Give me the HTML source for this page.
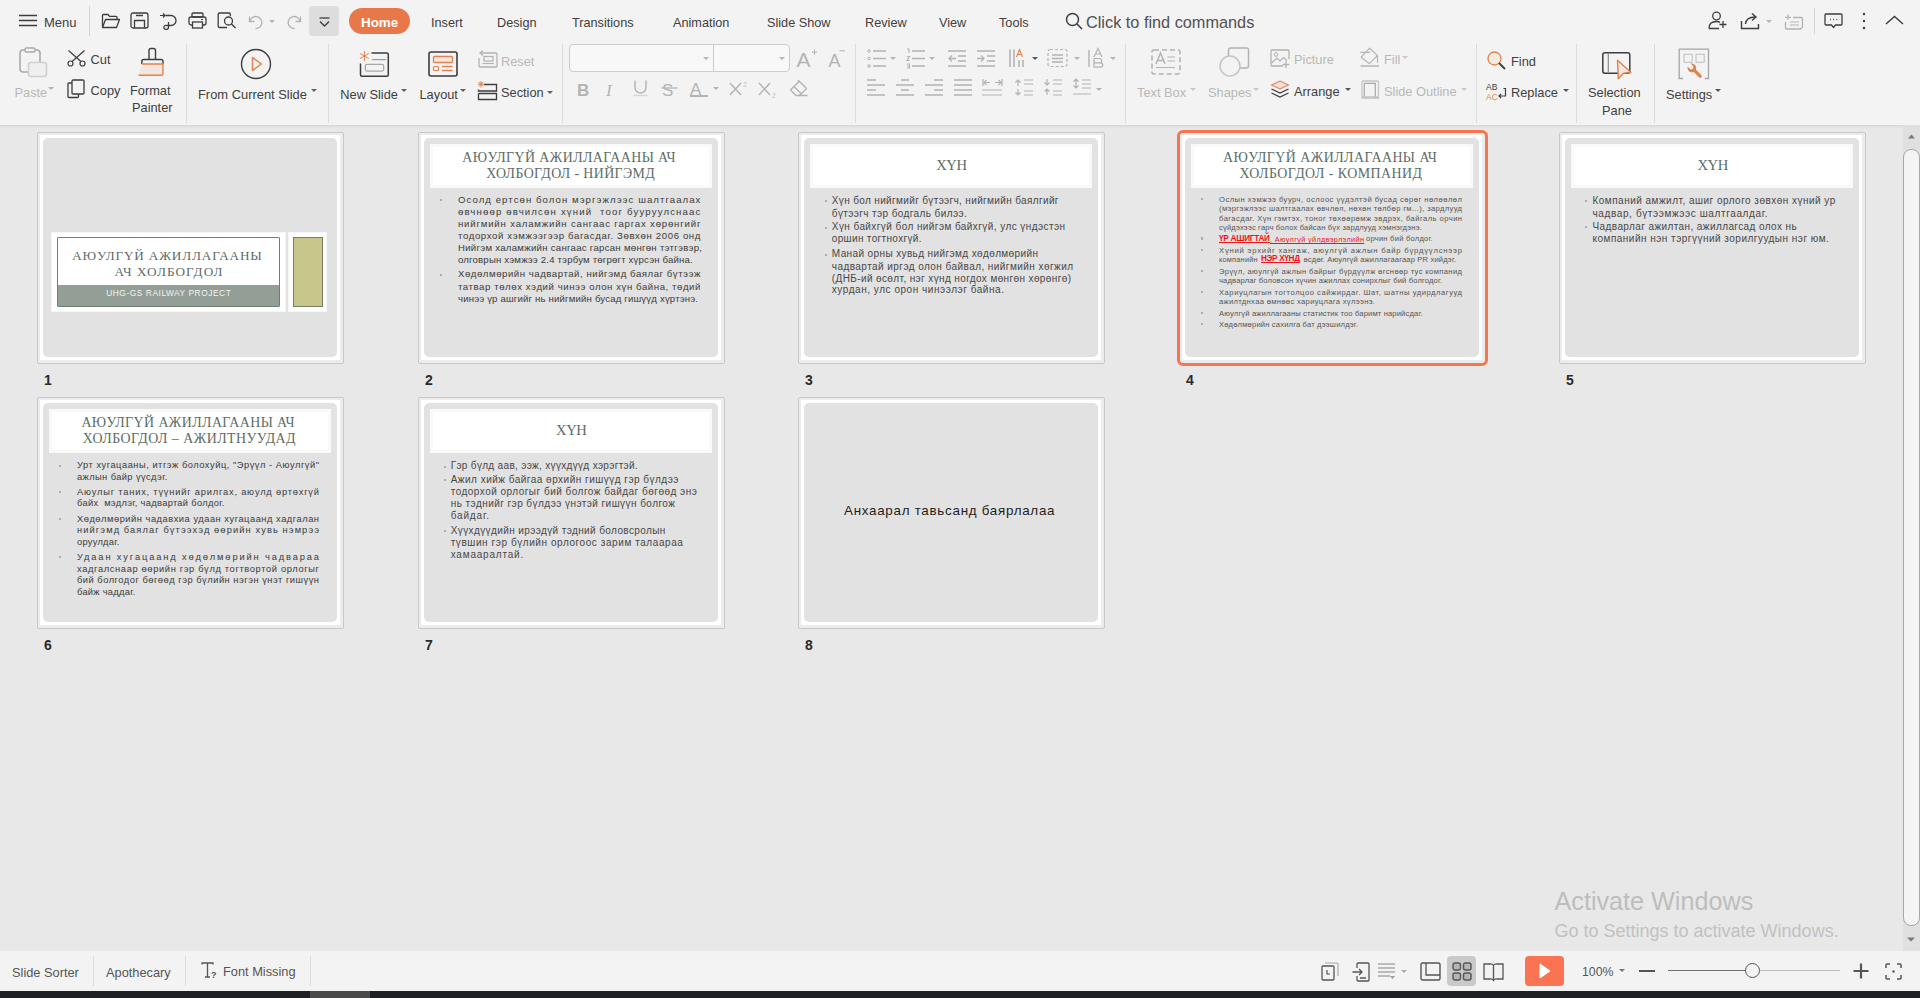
<!DOCTYPE html><html><head><meta charset="utf-8"><style>
html,body{margin:0;padding:0;}
body{width:1920px;height:998px;overflow:hidden;position:relative;background:#e8e8e8;font-family:"Liberation Sans",sans-serif;}
.t{position:absolute;white-space:pre;line-height:1;}
svg{overflow:visible}
</style></head><body>
<div style="position:absolute;left:0px;top:0px;width:1920px;height:125px;background:#f3f3f3"></div>
<div style="position:absolute;left:0px;top:125px;width:1920px;height:3px;background:linear-gradient(#d6d6d6,#e8e8e8)"></div>
<svg style="position:absolute;left:18px;top:14px" width="20" height="13" viewBox="0 0 20 13" fill="none"><path d="M1 1.5H19M1 6.5H19M1 11.5H19" stroke="#3d3d3d" stroke-width="1.4"/></svg>
<div class="t" style="left:44px;top:16.00px;font-size:13px;color:#404040;font-weight:400;font-family:'Liberation Sans', sans-serif;">Menu</div>
<div style="position:absolute;left:89px;top:6px;width:1px;height:30px;background:#d5d5d5"></div>
<svg style="position:absolute;left:101px;top:13px" width="20" height="16" viewBox="0 0 20 16" fill="none"><path d="M1.5 14V2.5a1 1 0 0 1 1-1h4.5l1.5 1.8h6.5a1 1 0 0 1 1 1V6" stroke="#3d3d3d" stroke-width="1.3"/><path d="M1.5 14.5L4.5 6.5H18.5L15.5 14.5Z" stroke="#3d3d3d" stroke-width="1.3" stroke-linejoin="round"/></svg>
<svg style="position:absolute;left:130px;top:12px" width="19" height="17" viewBox="0 0 19 17" fill="none"><rect x="1" y="1" width="17" height="15" rx="2" stroke="#3d3d3d" stroke-width="1.3"/><path d="M4.5 16V8.5H14.5V16M6 3.5H13" stroke="#3d3d3d" stroke-width="1.3"/></svg>
<svg style="position:absolute;left:159px;top:13px" width="19" height="17" viewBox="0 0 19 17" fill="none"><path d="M1 2.5H6M4 0.5L6 2.5L4 4.5" stroke="#3d3d3d" stroke-width="1.2"/><path d="M6.5 2.5H12a5 5 0 0 1 0 10H7.5a2 2 0 1 0 0 3.8 2 2 0 0 0 2-2V9" stroke="#3d3d3d" stroke-width="1.3"/></svg>
<svg style="position:absolute;left:188px;top:12px" width="19" height="17" viewBox="0 0 19 17" fill="none"><rect x="4" y="1" width="11" height="4" rx="1" stroke="#3d3d3d" stroke-width="1.3"/><rect x="1" y="5" width="17" height="8" rx="2" stroke="#3d3d3d" stroke-width="1.3"/><rect x="4.5" y="10" width="10" height="6" stroke="#3d3d3d" stroke-width="1.3" fill="#f3f3f3"/><path d="M13 7.5H15" stroke="#3d3d3d" stroke-width="1.2"/></svg>
<svg style="position:absolute;left:217px;top:12px" width="20" height="17" viewBox="0 0 20 17" fill="none"><path d="M10 15.5H2.5a1.3 1.3 0 0 1-1.3-1.3V2.3A1.3 1.3 0 0 1 2.5 1H12a1.3 1.3 0 0 1 1.3 1.3V4" stroke="#3d3d3d" stroke-width="1.3"/><circle cx="11.5" cy="9" r="4" stroke="#3d3d3d" stroke-width="1.3"/><path d="M14.5 12L18.5 16" stroke="#3d3d3d" stroke-width="1.4"/></svg>
<svg style="position:absolute;left:248px;top:15px" width="16" height="14" viewBox="0 0 16 14" fill="none"><path d="M1.5 1.5V6.5H6.5" stroke="#b3b3b3" stroke-width="1.3"/><path d="M2 6.2A6 6 0 1 1 7.5 13.5" stroke="#b3b3b3" stroke-width="1.3"/></svg>
<svg style="position:absolute;left:269px;top:20px" width="7" height="4" viewBox="0 0 7 4" fill="none"><path d="M0 0H6L3 3Z" fill="#b3b3b3"/></svg>
<svg style="position:absolute;left:286px;top:15px" width="16" height="14" viewBox="0 0 16 14" fill="none"><path d="M14.5 1.5V6.5H9.5" stroke="#b3b3b3" stroke-width="1.3"/><path d="M14 6.2A6 6 0 1 0 8.5 13.5" stroke="#b3b3b3" stroke-width="1.3"/></svg>
<div style="position:absolute;left:309px;top:6px;width:30px;height:30px;background:#dddddd;border-radius:4px"></div>
<svg style="position:absolute;left:319px;top:17px" width="11" height="10" viewBox="0 0 11 10" fill="none"><path d="M0.5 1H10.5" stroke="#3d3d3d" stroke-width="1.3"/><path d="M1 4.5L5.5 9L10 4.5" stroke="#3d3d3d" stroke-width="1.3"/></svg>
<div style="position:absolute;left:349px;top:8px;width:61px;height:26px;background:#e8784a;border-radius:13px"></div>
<div class="t" style="left:361px;top:15.66px;font-size:13.4px;color:#ffffff;font-weight:700;font-family:'Liberation Sans', sans-serif;">Home</div>
<div class="t" style="left:431px;top:17.25px;font-size:12.7px;color:#404040;font-weight:400;font-family:'Liberation Sans', sans-serif;">Insert</div>
<div class="t" style="left:497px;top:17.25px;font-size:12.7px;color:#404040;font-weight:400;font-family:'Liberation Sans', sans-serif;">Design</div>
<div class="t" style="left:572px;top:17.25px;font-size:12.7px;color:#404040;font-weight:400;font-family:'Liberation Sans', sans-serif;">Transitions</div>
<div class="t" style="left:673px;top:17.25px;font-size:12.7px;color:#404040;font-weight:400;font-family:'Liberation Sans', sans-serif;">Animation</div>
<div class="t" style="left:767px;top:17.25px;font-size:12.7px;color:#404040;font-weight:400;font-family:'Liberation Sans', sans-serif;">Slide Show</div>
<div class="t" style="left:865px;top:17.25px;font-size:12.7px;color:#404040;font-weight:400;font-family:'Liberation Sans', sans-serif;">Review</div>
<div class="t" style="left:939px;top:17.25px;font-size:12.7px;color:#404040;font-weight:400;font-family:'Liberation Sans', sans-serif;">View</div>
<div class="t" style="left:999px;top:17.25px;font-size:12.7px;color:#404040;font-weight:400;font-family:'Liberation Sans', sans-serif;">Tools</div>
<svg style="position:absolute;left:1065px;top:12px" width="19" height="19" viewBox="0 0 19 19" fill="none"><circle cx="7.5" cy="7.5" r="6" stroke="#3d3d3d" stroke-width="1.5"/><path d="M12 12L17 17" stroke="#3d3d3d" stroke-width="1.6"/></svg>
<div class="t" style="left:1086px;top:14.20px;font-size:16.3px;color:#505050;font-weight:400;font-family:'Liberation Sans', sans-serif;">Click to find commands</div>
<svg style="position:absolute;left:1708px;top:11px" width="20" height="19" viewBox="0 0 20 19" fill="none"><circle cx="8.5" cy="5" r="3.8" stroke="#3d3d3d" stroke-width="1.3"/><path d="M1 17.5C1 13 4 10.5 8.5 10.5c1.5 0 2.5.3 3.5.8" stroke="#3d3d3d" stroke-width="1.3"/><path d="M1 17.5H11M15 10V17M11.5 13.5H18.5" stroke="#3d3d3d" stroke-width="1.3"/></svg>
<svg style="position:absolute;left:1740px;top:12px" width="20" height="18" viewBox="0 0 20 18" fill="none"><path d="M1.5 9V16.5H18.5V12" stroke="#3d3d3d" stroke-width="1.4"/><path d="M5.5 12C6 7.5 9.5 5 15 5" stroke="#3d3d3d" stroke-width="1.4"/><path d="M12 1.5L16 5L12 8.5" stroke="#3d3d3d" stroke-width="1.4"/></svg>
<svg style="position:absolute;left:1766px;top:20px" width="7" height="4" viewBox="0 0 7 4" fill="none"><path d="M0 0H6L3 3Z" fill="#b3b3b3"/></svg>
<svg style="position:absolute;left:1784px;top:14px" width="20" height="16" viewBox="0 0 20 16" fill="none"><path d="M4 0.5V6M1 3.3H7" stroke="#b3b3b3" stroke-width="1.2"/><path d="M9 3.5H17.5a1 1 0 0 1 1 1V13l-2 2H2.5a1 1 0 0 1-1-1V8" stroke="#b3b3b3" stroke-width="1.3"/><path d="M6 8H15M6 11H15" stroke="#b3b3b3" stroke-width="1.2"/></svg>
<div style="position:absolute;left:1814px;top:8px;width:1px;height:26px;background:#d5d5d5"></div>
<svg style="position:absolute;left:1824px;top:13px" width="19" height="16" viewBox="0 0 19 16" fill="none"><path d="M2 1H17a1 1 0 0 1 1 1V11a1 1 0 0 1-1 1H11.5L9.5 14.5L7.5 12H2a1 1 0 0 1-1-1V2a1 1 0 0 1 1-1Z" stroke="#3d3d3d" stroke-width="1.3"/><path d="M6 6.5H6.8M9.2 6.5H10M12.4 6.5H13.2" stroke="#3d3d3d" stroke-width="1.5"/></svg>
<svg style="position:absolute;left:1862px;top:12px" width="4" height="18" viewBox="0 0 4 18" fill="none"><circle cx="2" cy="2" r="1.2" fill="#3d3d3d"/><circle cx="2" cy="9" r="1.2" fill="#3d3d3d"/><circle cx="2" cy="16" r="1.2" fill="#3d3d3d"/></svg>
<svg style="position:absolute;left:1885px;top:15px" width="19" height="10" viewBox="0 0 19 10" fill="none"><path d="M1 9L9.5 1.5L18 9" stroke="#3d3d3d" stroke-width="1.4"/></svg>
<div style="position:absolute;left:186px;top:44px;width:1px;height:79px;background:#dcdcdc"></div>
<div style="position:absolute;left:328px;top:44px;width:1px;height:79px;background:#dcdcdc"></div>
<div style="position:absolute;left:562px;top:44px;width:1px;height:79px;background:#dcdcdc"></div>
<div style="position:absolute;left:855px;top:44px;width:1px;height:79px;background:#dcdcdc"></div>
<div style="position:absolute;left:1125px;top:44px;width:1px;height:79px;background:#dcdcdc"></div>
<div style="position:absolute;left:1476px;top:44px;width:1px;height:79px;background:#dcdcdc"></div>
<div style="position:absolute;left:1576px;top:44px;width:1px;height:79px;background:#dcdcdc"></div>
<div style="position:absolute;left:1654px;top:44px;width:1px;height:79px;background:#dcdcdc"></div>
<svg style="position:absolute;left:19px;top:47px" width="29" height="31" viewBox="0 0 29 31" fill="none"><rect x="1" y="3" width="20" height="22" rx="3" stroke="#aaaaaa" stroke-width="1.6"/><rect x="6" y="1" width="10" height="4" rx="1.5" stroke="#aaaaaa" stroke-width="1.5" fill="#f3f3f3"/><rect x="9.5" y="15.5" width="18" height="14" rx="2.5" stroke="#d0d0d0" stroke-width="1.6" fill="#efefef"/></svg>
<div class="t" style="left:14.5px;top:86.96px;font-size:12.8px;color:#b8b8b8;font-weight:400;font-family:'Liberation Sans', sans-serif;">Paste</div>
<svg style="position:absolute;left:48px;top:87px" width="7" height="4" viewBox="0 0 7 4" fill="none"><path d="M0 0H6L3 3Z" fill="#b3b3b3"/></svg>
<svg style="position:absolute;left:67px;top:50px" width="19" height="17" viewBox="0 0 19 17" fill="none"><path d="M1.5 0.5L14.5 12M17.5 0.5L4.5 12" stroke="#3d3d3d" stroke-width="1.2"/><circle cx="3.5" cy="13.5" r="2.5" stroke="#3d3d3d" stroke-width="1.2" fill="#f3f3f3"/><circle cx="15.5" cy="13.5" r="2.5" stroke="#3d3d3d" stroke-width="1.2" fill="#f3f3f3"/></svg>
<div class="t" style="left:90.6px;top:54.16px;font-size:12.8px;color:#404040;font-weight:400;font-family:'Liberation Sans', sans-serif;">Cut</div>
<svg style="position:absolute;left:67px;top:79px" width="18" height="20" viewBox="0 0 18 20" fill="none"><rect x="5" y="1" width="12" height="14" rx="1" stroke="#3d3d3d" stroke-width="1.3"/><path d="M5 4H2a1 1 0 0 0-1 1V17.5a1 1 0 0 0 1 1H10.5a1 1 0 0 0 1-1V15" stroke="#3d3d3d" stroke-width="1.3"/></svg>
<div class="t" style="left:90.6px;top:84.86px;font-size:12.8px;color:#404040;font-weight:400;font-family:'Liberation Sans', sans-serif;">Copy</div>
<svg style="position:absolute;left:138px;top:47px" width="28" height="30" viewBox="0 0 28 30" fill="none"><path d="M11 12.5V3.5a2 2 0 0 1 2-2h2.5a2 2 0 0 1 2 2V12.5" stroke="#3d3d3d" stroke-width="1.4"/><path d="M3.8 17V14.5a2 2 0 0 1 2-2H23a2 2 0 0 1 2 2V17" stroke="#3d3d3d" stroke-width="1.4"/><path d="M3.8 17H25V26.8a1.5 1.5 0 0 1-1.5 1.5H0.5" stroke="#e0834f" stroke-width="1.4" fill="#f3e5df"/></svg>
<div class="t" style="left:130px;top:84.86px;font-size:12.8px;color:#404040;font-weight:400;font-family:'Liberation Sans', sans-serif;">Format</div>
<div class="t" style="left:132px;top:102.06px;font-size:12.8px;color:#404040;font-weight:400;font-family:'Liberation Sans', sans-serif;">Painter</div>
<svg style="position:absolute;left:240px;top:48px" width="32" height="32" viewBox="0 0 32 32" fill="none"><circle cx="16" cy="16" r="14.5" stroke="#3d3d3d" stroke-width="1.4"/><path d="M12.5 9.5L21.5 16L12.5 22.5Z" stroke="#e0834f" stroke-width="1.5" stroke-linejoin="round"/></svg>
<div class="t" style="left:198px;top:88.58px;font-size:12.9px;color:#404040;font-weight:400;font-family:'Liberation Sans', sans-serif;">From Current Slide</div>
<svg style="position:absolute;left:311px;top:89px" width="6" height="4" viewBox="0 0 6 4" fill="none"><path d="M0 0H6L3 3Z" fill="#606060"/></svg>
<svg style="position:absolute;left:359px;top:50px" width="31" height="28" viewBox="0 0 31 28" fill="none"><path d="M12.5 3H27.8a1.5 1.5 0 0 1 1.5 1.5V24.8a1.5 1.5 0 0 1-1.5 1.5H3a1.5 1.5 0 0 1-1.5-1.5V13.5" stroke="#3d3d3d" stroke-width="1.5"/><path d="M13 9.6H27" stroke="#9a9a9a" stroke-width="1.2"/><rect x="6.4" y="14.4" width="18.2" height="6.7" rx="1.5" stroke="#a8a8a8" stroke-width="1.3"/><path d="M5.4 1V11M1.1 3.5L9.7 8.5M9.7 3.5L1.1 8.5" stroke="#e0834f" stroke-width="1"/></svg>
<div class="t" style="left:340.3px;top:89.06px;font-size:12.8px;color:#404040;font-weight:400;font-family:'Liberation Sans', sans-serif;">New Slide</div>
<svg style="position:absolute;left:401px;top:89px" width="6" height="4" viewBox="0 0 6 4" fill="none"><path d="M0 0H6L3 3Z" fill="#606060"/></svg>
<svg style="position:absolute;left:428px;top:51px" width="30" height="26" viewBox="0 0 30 26" fill="none"><rect x="1" y="1" width="28" height="24" rx="2" stroke="#3d3d3d" stroke-width="1.6"/><rect x="5.5" y="5.5" width="19" height="6" rx="1" stroke="#e0834f" stroke-width="1.3" fill="#f3e6e0"/><rect x="5.5" y="15.5" width="5" height="4" rx="1" stroke="#e0834f" stroke-width="1.2"/><path d="M14 15.5H24.5M14 19.5H24.5" stroke="#e0834f" stroke-width="1.3"/></svg>
<div class="t" style="left:419.5px;top:89.06px;font-size:12.8px;color:#404040;font-weight:400;font-family:'Liberation Sans', sans-serif;">Layout</div>
<svg style="position:absolute;left:460px;top:89px" width="6" height="4" viewBox="0 0 6 4" fill="none"><path d="M0 0H6L3 3Z" fill="#606060"/></svg>
<svg style="position:absolute;left:477px;top:50px" width="21" height="18" viewBox="0 0 21 18" fill="none"><path d="M4 3H19a1 1 0 0 1 1 1V16a1 1 0 0 1-1 1H3a1 1 0 0 1-1-1V8" stroke="#b3b3b3" stroke-width="1.3"/><rect x="7" y="6.5" width="9" height="4.5" stroke="#b3b3b3" stroke-width="1.2"/><path d="M5.5 13.5H17" stroke="#b3b3b3" stroke-width="1.2"/><path d="M6 0.5L3 3L6 5.5" stroke="#b3b3b3" stroke-width="1.2"/></svg>
<div class="t" style="left:501px;top:55.76px;font-size:12.8px;color:#b8b8b8;font-weight:400;font-family:'Liberation Sans', sans-serif;">Reset</div>
<svg style="position:absolute;left:477px;top:81px" width="21" height="20" viewBox="0 0 21 20" fill="none"><path d="M7 3.5H19.5V10H1.5V8.5" stroke="#3d3d3d" stroke-width="1.3"/><path d="M1.5 12.5V18.5H19.5V12.5H1.5" stroke="#3d3d3d" stroke-width="1.3"/><path d="M4 0V6.5M0.8 3.2H7.2M1.8 1L6.2 5.5M6.2 1L1.8 5.5" stroke="#e0834f" stroke-width="1"/></svg>
<div class="t" style="left:501px;top:86.96px;font-size:12.8px;color:#404040;font-weight:400;font-family:'Liberation Sans', sans-serif;">Section</div>
<svg style="position:absolute;left:547px;top:91px" width="6" height="4" viewBox="0 0 6 4" fill="none"><path d="M0 0H6L3 3Z" fill="#606060"/></svg>
<div style="position:absolute;left:569px;top:44px;width:219px;height:26px;border:1px solid #cccccc;border-radius:4px;background:#f8f8f8"></div>
<div style="position:absolute;left:713px;top:45px;width:1px;height:26px;background:#cccccc"></div>
<svg style="position:absolute;left:703px;top:57px" width="6" height="4" viewBox="0 0 6 4" fill="none"><path d="M0 0H6L3 3Z" fill="#b3b3b3"/></svg>
<svg style="position:absolute;left:779px;top:57px" width="6" height="4" viewBox="0 0 6 4" fill="none"><path d="M0 0H6L3 3Z" fill="#b3b3b3"/></svg>
<div class="t" style="left:796.5px;top:49.22px;font-size:21px;color:#b3b3b3;font-weight:400;font-family:'Liberation Sans', sans-serif;letter-spacing:0;">A</div>
<svg style="position:absolute;left:811px;top:49px" width="7" height="7" viewBox="0 0 7 7" fill="none"><path d="M3.5 0.5V6M0.8 3.2H6.2" stroke="#b3b3b3" stroke-width="1"/></svg>
<div class="t" style="left:828.5px;top:51.76px;font-size:18px;color:#b3b3b3;font-weight:400;font-family:'Liberation Sans', sans-serif;">A</div>
<svg style="position:absolute;left:839px;top:50px" width="7" height="2" viewBox="0 0 7 2" fill="none"><path d="M0.5 0.8H6" stroke="#b3b3b3" stroke-width="1"/></svg>
<div class="t" style="left:577px;top:81.61px;font-size:17px;color:#b3b3b3;font-weight:700;font-family:'Liberation Sans', sans-serif;">B</div>
<div class="t" style="left:606px;top:81.76px;font-size:17px;color:#b3b3b3;font-weight:400;font-family:'Liberation Serif', serif;font-style:italic;">I</div>
<svg style="position:absolute;left:633px;top:80px" width="16" height="17" viewBox="0 0 16 17" fill="none"><path d="M2 0.5V7.5a5.5 5.5 0 0 0 11 0V0.5" stroke="#b3b3b3" stroke-width="1.4"/><path d="M0.5 15.5H14.5" stroke="#d3d3d3" stroke-width="1.3"/></svg>
<div class="t" style="left:662px;top:81.61px;font-size:17px;color:#b3b3b3;font-weight:400;font-family:'Liberation Sans', sans-serif;">S</div>
<svg style="position:absolute;left:661px;top:87px" width="17" height="2" viewBox="0 0 17 2" fill="none"><path d="M0.5 1H16.5" stroke="#b3b3b3" stroke-width="1.3"/></svg>
<div class="t" style="left:690px;top:80.61px;font-size:17px;color:#b3b3b3;font-weight:400;font-family:'Liberation Sans', sans-serif;">A</div>
<div style="position:absolute;left:690px;top:95px;width:18px;height:2px;background:#b3b3b3"></div>
<svg style="position:absolute;left:713px;top:87px" width="7" height="4" viewBox="0 0 7 4" fill="none"><path d="M0 0H6L3 3Z" fill="#b3b3b3"/></svg>
<svg style="position:absolute;left:729px;top:80px" width="20" height="16" viewBox="0 0 20 16" fill="none"><path d="M1 3L12 15M12 3L1 15" stroke="#b3b3b3" stroke-width="1.4"/><text x="14" y="7" font-size="7" fill="#c4c4c4" font-family="Liberation Sans">2</text></svg>
<svg style="position:absolute;left:758px;top:82px" width="20" height="16" viewBox="0 0 20 16" fill="none"><path d="M1 1L12 13M12 1L1 13" stroke="#b3b3b3" stroke-width="1.4"/><text x="14" y="16" font-size="7" fill="#c4c4c4" font-family="Liberation Sans">2</text></svg>
<svg style="position:absolute;left:789px;top:79px" width="20" height="18" viewBox="0 0 20 18" fill="none"><path d="M9.5 1.5L17.5 9.5L10.5 16.5H7L1.5 11L9.5 3Z" stroke="#b3b3b3" stroke-width="1.4" stroke-linejoin="round"/><path d="M5 7.5L12.5 15M10 16.5H18.5" stroke="#b3b3b3" stroke-width="1.4"/></svg>
<svg style="position:absolute;left:867px;top:48px" width="19" height="20" viewBox="0 0 19 20" fill="none"><circle cx="2" cy="3" r="1.3" stroke="#b3b3b3"/><circle cx="2" cy="10.5" r="1.3" stroke="#b3b3b3"/><circle cx="2" cy="18" r="1.3" stroke="#b3b3b3"/><path d="M6 3H19M6 10.5H19M6 18H19" stroke="#b3b3b3" stroke-width="1.3"/></svg>
<svg style="position:absolute;left:890px;top:57px" width="7" height="4" viewBox="0 0 7 4" fill="none"><path d="M0 0H6L3 3Z" fill="#b3b3b3"/></svg>
<svg style="position:absolute;left:906px;top:48px" width="19" height="20" viewBox="0 0 19 20" fill="none"><path d="M1 1H3V5M1 8.5H3.5L1 12.5H3.5M1 16H3.5V20H1M3.5 18H1" stroke="#b3b3b3" stroke-width="1.1"/><path d="M6 3H19M6 10.5H19M6 18H19" stroke="#b3b3b3" stroke-width="1.3"/></svg>
<svg style="position:absolute;left:929px;top:57px" width="7" height="4" viewBox="0 0 7 4" fill="none"><path d="M0 0H6L3 3Z" fill="#b3b3b3"/></svg>
<svg style="position:absolute;left:948px;top:48px" width="19" height="20" viewBox="0 0 19 20" fill="none"><path d="M0 3H18M10 8H18M10 13H18M0 18H18M8 10.5H1M4 7.5L1 10.5L4 13.5" stroke="#b3b3b3" stroke-width="1.3"/></svg>
<svg style="position:absolute;left:977px;top:48px" width="19" height="20" viewBox="0 0 19 20" fill="none"><path d="M0 3H18M10 8H18M10 13H18M0 18H18M0 10.5H7M4 7.5L7 10.5L4 13.5" stroke="#b3b3b3" stroke-width="1.3"/></svg>
<svg style="position:absolute;left:1009px;top:48px" width="20" height="20" viewBox="0 0 20 20" fill="none"><path d="M1 1.5V19M5 1.5V19M10 12V19M14 12V19" stroke="#b3b3b3" stroke-width="1.6"/><path d="M7.5 9L10.5 1.5L13.5 9M8.5 6.5H12.5" stroke="#e0834f" stroke-width="1.1"/></svg>
<svg style="position:absolute;left:1032px;top:57px" width="7" height="4" viewBox="0 0 7 4" fill="none"><path d="M0 0H6L3 3Z" fill="#555"/></svg>
<svg style="position:absolute;left:1047px;top:48px" width="21" height="20" viewBox="0 0 21 20" fill="none"><rect x="1" y="1.5" width="19" height="17" rx="2" stroke="#b3b3b3" stroke-width="1.2" stroke-dasharray="3 2"/><path d="M5 7H16M5 10.5H16M5 14H16" stroke="#b3b3b3" stroke-width="1.3"/></svg>
<svg style="position:absolute;left:1074px;top:57px" width="7" height="4" viewBox="0 0 7 4" fill="none"><path d="M0 0H6L3 3Z" fill="#b3b3b3"/></svg>
<svg style="position:absolute;left:1088px;top:48px" width="17" height="20" viewBox="0 0 17 20" fill="none"><path d="M1 2V19" stroke="#b3b3b3" stroke-width="1.4"/><path d="M6 9L10 0.5L14 9M7.5 6H12.5" stroke="#b3b3b3" stroke-width="1.2"/><path d="M6 10.5H12a2.2 2.2 0 0 1 0 4.3H6V10.5M6 14.8H12.5a2.2 2.2 0 0 1 0 4.4H6Z" stroke="#b3b3b3" stroke-width="1.2"/></svg>
<svg style="position:absolute;left:1110px;top:57px" width="7" height="4" viewBox="0 0 7 4" fill="none"><path d="M0 0H6L3 3Z" fill="#b3b3b3"/></svg>
<svg style="position:absolute;left:867px;top:79px" width="19" height="17" viewBox="0 0 19 17" fill="none"><path d="M0 1H9M0 6H18M0 11H9M0 16H18" stroke="#b3b3b3" stroke-width="1.3"/></svg>
<svg style="position:absolute;left:896px;top:79px" width="19" height="17" viewBox="0 0 19 17" fill="none"><path d="M5 1H13M0 6H18M5 11H13M0 16H18" stroke="#b3b3b3" stroke-width="1.3"/></svg>
<svg style="position:absolute;left:925px;top:79px" width="19" height="17" viewBox="0 0 19 17" fill="none"><path d="M9 1H18M0 6H18M9 11H18M0 16H18" stroke="#b3b3b3" stroke-width="1.3"/></svg>
<svg style="position:absolute;left:954px;top:79px" width="19" height="17" viewBox="0 0 19 17" fill="none"><path d="M0 1H18M0 6H18M0 11H18M0 16H18" stroke="#b3b3b3" stroke-width="1.3"/></svg>
<svg style="position:absolute;left:982px;top:79px" width="21" height="17" viewBox="0 0 21 17" fill="none"><path d="M1 0V7M20 0V7M2 3.5H8M19 3.5H13M4.5 1L2 3.5L4.5 6M16.5 1L19 3.5L16.5 6M0 11H20M0 16H20" stroke="#b3b3b3" stroke-width="1.2"/></svg>
<svg style="position:absolute;left:1015px;top:79px" width="19" height="17" viewBox="0 0 19 17" fill="none"><path d="M3 1V7M0.5 3.5L3 1L5.5 3.5M3 10V16M0.5 13.5L3 16L5.5 13.5M9 1H18M9 5H18M9 12H18M9 16H18" stroke="#b3b3b3" stroke-width="1.2"/></svg>
<svg style="position:absolute;left:1044px;top:79px" width="19" height="17" viewBox="0 0 19 17" fill="none"><path d="M3 0V6M0.5 3.5L3 6L5.5 3.5M3 10V16M0.5 12.5L3 10L5.5 12.5M9 1H18M9 5H18M9 12H18M9 16H18" stroke="#b3b3b3" stroke-width="1.2"/></svg>
<svg style="position:absolute;left:1073px;top:78px" width="19" height="18" viewBox="0 0 19 18" fill="none"><path d="M3 1V10M0.5 3.5L3 1L5.5 3.5M0.5 7.5L3 10L5.5 7.5M9 2H18M9 6H18M9 10H18M0 16H18" stroke="#b3b3b3" stroke-width="1.2"/></svg>
<svg style="position:absolute;left:1096px;top:88px" width="7" height="4" viewBox="0 0 7 4" fill="none"><path d="M0 0H6L3 3Z" fill="#b3b3b3"/></svg>
<svg style="position:absolute;left:1151px;top:49px" width="30" height="26" viewBox="0 0 30 26" fill="none"><rect x="1" y="1" width="28" height="24" rx="2" stroke="#b3b3b3" stroke-width="1.6" stroke-dasharray="5 3"/><path d="M5 15L9.5 4L14 15M6.5 11.5H12.5" stroke="#b3b3b3" stroke-width="1.5"/><path d="M16.5 8H24M16.5 12H24M5 18.5H24" stroke="#b3b3b3" stroke-width="1.2"/></svg>
<div class="t" style="left:1137px;top:87.16px;font-size:12.8px;color:#b8b8b8;font-weight:400;font-family:'Liberation Sans', sans-serif;">Text Box</div>
<svg style="position:absolute;left:1190px;top:88px" width="6" height="4" viewBox="0 0 6 4" fill="none"><path d="M0 0H6L3 3Z" fill="#c8c8c8"/></svg>
<svg style="position:absolute;left:1219px;top:47px" width="31" height="30" viewBox="0 0 31 30" fill="none"><rect x="9.5" y="1" width="20" height="20" rx="2" stroke="#b3b3b3" stroke-width="1.5"/><circle cx="11" cy="19" r="10" stroke="#c4c4c4" stroke-width="1.5" fill="#f3f3f3"/></svg>
<div class="t" style="left:1208px;top:87.16px;font-size:12.8px;color:#b8b8b8;font-weight:400;font-family:'Liberation Sans', sans-serif;">Shapes</div>
<svg style="position:absolute;left:1253px;top:88px" width="6" height="4" viewBox="0 0 6 4" fill="none"><path d="M0 0H6L3 3Z" fill="#c8c8c8"/></svg>
<svg style="position:absolute;left:1270px;top:49px" width="21" height="19" viewBox="0 0 21 19" fill="none"><path d="M13 17H2a1 1 0 0 1-1-1V2a1 1 0 0 1 1-1H18a1 1 0 0 1 1 1V10" stroke="#b3b3b3" stroke-width="1.3"/><circle cx="6" cy="5.5" r="1.8" stroke="#b3b3b3"/><path d="M1.5 14L7 9L10 12L13.5 8.5L17 11.5" stroke="#b3b3b3" stroke-width="1.2"/><path d="M16 12V19M12.5 15.5H19.5" stroke="#b3b3b3" stroke-width="1.3"/></svg>
<div class="t" style="left:1294px;top:54.16px;font-size:12.8px;color:#b8b8b8;font-weight:400;font-family:'Liberation Sans', sans-serif;">Picture</div>
<svg style="position:absolute;left:1360px;top:47px" width="20" height="21" viewBox="0 0 20 21" fill="none"><path d="M9.6 1.2L17.5 8.6L9.2 16.6L1.2 10.2Z" stroke="#b3b3b3" stroke-width="1.2" stroke-linejoin="round"/><path d="M0.5 5.3H10M17.5 8.6V15.8" stroke="#b3b3b3" stroke-width="1.2"/><path d="M0.5 19H19" stroke="#c4c4c4" stroke-width="2"/></svg>
<div class="t" style="left:1384px;top:54.16px;font-size:12.8px;color:#b8b8b8;font-weight:400;font-family:'Liberation Sans', sans-serif;">Fill</div>
<svg style="position:absolute;left:1402px;top:56px" width="7" height="4" viewBox="0 0 7 4" fill="none"><path d="M0 0H6L3 3Z" fill="#c8c8c8"/></svg>
<svg style="position:absolute;left:1270px;top:80px" width="20" height="19" viewBox="0 0 20 19" fill="none"><path d="M10 1L18.5 5L10 9L1.5 5Z" stroke="#e0834f" stroke-width="1.1" fill="#f3e0d8"/><path d="M1.5 9L10 13L18.5 9M1.5 13L10 17L18.5 13" stroke="#3d3d3d" stroke-width="1.3"/></svg>
<div class="t" style="left:1294px;top:85.86px;font-size:12.8px;color:#404040;font-weight:400;font-family:'Liberation Sans', sans-serif;">Arrange</div>
<svg style="position:absolute;left:1345px;top:88px" width="7" height="4" viewBox="0 0 7 4" fill="none"><path d="M0 0H6L3 3Z" fill="#555"/></svg>
<svg style="position:absolute;left:1361px;top:80px" width="19" height="19" viewBox="0 0 19 19" fill="none"><rect x="1" y="1" width="16.5" height="16" rx="1" stroke="#c6c6c6" stroke-width="1.3"/><path d="M3.3 16.5V3.3H14.3V16.5" stroke="#a8a8a8" stroke-width="1.2"/><path d="M0.5 17.8H18" stroke="#c4c4c4" stroke-width="2"/></svg>
<div class="t" style="left:1384px;top:85.86px;font-size:12.8px;color:#b8b8b8;font-weight:400;font-family:'Liberation Sans', sans-serif;">Slide Outline</div>
<svg style="position:absolute;left:1461px;top:88px" width="7" height="4" viewBox="0 0 7 4" fill="none"><path d="M0 0H6L3 3Z" fill="#c8c8c8"/></svg>
<svg style="position:absolute;left:1487px;top:51px" width="20" height="19" viewBox="0 0 20 19" fill="none"><circle cx="7.5" cy="7.5" r="6.5" stroke="#e0834f" stroke-width="1.3" fill="#f7e8e0"/><path d="M12 12L18 18" stroke="#3d3d3d" stroke-width="1.8"/></svg>
<div class="t" style="left:1511px;top:55.76px;font-size:12.8px;color:#404040;font-weight:400;font-family:'Liberation Sans', sans-serif;">Find</div>
<svg style="position:absolute;left:1486px;top:82px" width="21" height="19" viewBox="0 0 21 19" fill="none"><text x="0" y="7.5" font-size="8.5" fill="#3d3d3d" font-family="Liberation Sans">AB</text><text x="0" y="17.5" font-size="8.5" fill="#e0834f" font-family="Liberation Sans">AC</text><path d="M17.5 6.5H19.5V14H13M15 12L13 14L15 16" stroke="#3d3d3d" stroke-width="1.2"/></svg>
<div class="t" style="left:1511px;top:86.96px;font-size:12.8px;color:#404040;font-weight:400;font-family:'Liberation Sans', sans-serif;">Replace</div>
<svg style="position:absolute;left:1563px;top:89px" width="7" height="4" viewBox="0 0 7 4" fill="none"><path d="M0 0H6L3 3Z" fill="#555"/></svg>
<svg style="position:absolute;left:1602px;top:52px" width="31" height="28" viewBox="0 0 31 28" fill="none"><rect x="0.8" y="0.8" width="27" height="20.5" rx="2.2" stroke="#3d3d3d" stroke-width="1.5"/><path d="M6.3 1.5V20.8" stroke="#8a8a8a" stroke-width="1.2"/><path d="M15.5 8.2L28.8 20.3L21.5 21.2L16.3 26.8Z" fill="#f4e6e0" stroke="#e0834f" stroke-width="1.4" stroke-linejoin="round"/></svg>
<div class="t" style="left:1588px;top:87.16px;font-size:12.8px;color:#404040;font-weight:400;font-family:'Liberation Sans', sans-serif;">Selection</div>
<div class="t" style="left:1602px;top:104.66px;font-size:12.8px;color:#404040;font-weight:400;font-family:'Liberation Sans', sans-serif;">Pane</div>
<svg style="position:absolute;left:1678px;top:48px" width="32" height="32" viewBox="0 0 32 32" fill="none"><path d="M5 30.5H1.2V1.2H30.5V30.5H26.7" stroke="#a5a5a5" stroke-width="1.3"/><rect x="6" y="6.3" width="8.2" height="8" stroke="#c2c2c2" stroke-width="1.1"/><rect x="18" y="6.3" width="8.2" height="8" stroke="#c2c2c2" stroke-width="1.1"/><path d="M9.6 18.6a4.6 4.6 0 0 0 6.1 5.4L21 29.3a1.6 1.6 0 0 0 2.3-2.3L18 21.7a4.6 4.6 0 0 0-5.4-6.1l2.9 2.9-0.6 2.4-2.4 0.6Z" fill="#e0834f"/></svg>
<div class="t" style="left:1666px;top:88.66px;font-size:12.8px;color:#404040;font-weight:400;font-family:'Liberation Sans', sans-serif;">Settings</div>
<svg style="position:absolute;left:1715px;top:89px" width="6" height="4" viewBox="0 0 6 4" fill="none"><path d="M0 0H6L3 3Z" fill="#555"/></svg>
<div style="position:absolute;left:37px;top:132px;width:305px;height:230px;border:1px solid #c8c8c8;border-radius:2px;background:#ececec"></div>
<div style="position:absolute;left:40px;top:135px;width:300px;height:225px;background:#ffffff"></div>
<div style="position:absolute;left:43px;top:138px;width:294px;height:219px;background:#e2e2e2;border-radius:5px"></div>
<div class="t" style="left:44px;top:372.65px;font-size:14px;color:#2a2a2a;font-weight:700;font-family:'Liberation Sans', sans-serif;">1</div>
<div style="position:absolute;left:418px;top:132px;width:305px;height:230px;border:1px solid #c8c8c8;border-radius:2px;background:#ececec"></div>
<div style="position:absolute;left:421px;top:135px;width:300px;height:225px;background:#ffffff"></div>
<div style="position:absolute;left:424px;top:138px;width:294px;height:219px;background:#e2e2e2;border-radius:5px"></div>
<div class="t" style="left:425px;top:372.65px;font-size:14px;color:#2a2a2a;font-weight:700;font-family:'Liberation Sans', sans-serif;">2</div>
<div style="position:absolute;left:798px;top:132px;width:305px;height:230px;border:1px solid #c8c8c8;border-radius:2px;background:#ececec"></div>
<div style="position:absolute;left:801px;top:135px;width:300px;height:225px;background:#ffffff"></div>
<div style="position:absolute;left:804px;top:138px;width:294px;height:219px;background:#e2e2e2;border-radius:5px"></div>
<div class="t" style="left:805px;top:372.65px;font-size:14px;color:#2a2a2a;font-weight:700;font-family:'Liberation Sans', sans-serif;">3</div>
<div style="position:absolute;left:1177px;top:130px;width:305px;height:230px;border:3px solid #fa7350;border-radius:6px;background:#e9ecec"></div>
<div style="position:absolute;left:1182px;top:135px;width:300px;height:225px;background:#ffffff"></div>
<div style="position:absolute;left:1185px;top:138px;width:294px;height:219px;background:#e2e2e2;border-radius:5px"></div>
<div class="t" style="left:1186px;top:372.65px;font-size:14px;color:#2a2a2a;font-weight:700;font-family:'Liberation Sans', sans-serif;">4</div>
<div style="position:absolute;left:1559px;top:132px;width:305px;height:230px;border:1px solid #c8c8c8;border-radius:2px;background:#ececec"></div>
<div style="position:absolute;left:1562px;top:135px;width:300px;height:225px;background:#ffffff"></div>
<div style="position:absolute;left:1565px;top:138px;width:294px;height:219px;background:#e2e2e2;border-radius:5px"></div>
<div class="t" style="left:1566px;top:372.65px;font-size:14px;color:#2a2a2a;font-weight:700;font-family:'Liberation Sans', sans-serif;">5</div>
<div style="position:absolute;left:37px;top:397px;width:305px;height:230px;border:1px solid #c8c8c8;border-radius:2px;background:#ececec"></div>
<div style="position:absolute;left:40px;top:400px;width:300px;height:225px;background:#ffffff"></div>
<div style="position:absolute;left:43px;top:403px;width:294px;height:219px;background:#e2e2e2;border-radius:5px"></div>
<div class="t" style="left:44px;top:637.65px;font-size:14px;color:#2a2a2a;font-weight:700;font-family:'Liberation Sans', sans-serif;">6</div>
<div style="position:absolute;left:418px;top:397px;width:305px;height:230px;border:1px solid #c8c8c8;border-radius:2px;background:#ececec"></div>
<div style="position:absolute;left:421px;top:400px;width:300px;height:225px;background:#ffffff"></div>
<div style="position:absolute;left:424px;top:403px;width:294px;height:219px;background:#e2e2e2;border-radius:5px"></div>
<div class="t" style="left:425px;top:637.65px;font-size:14px;color:#2a2a2a;font-weight:700;font-family:'Liberation Sans', sans-serif;">7</div>
<div style="position:absolute;left:798px;top:397px;width:305px;height:230px;border:1px solid #c8c8c8;border-radius:2px;background:#ececec"></div>
<div style="position:absolute;left:801px;top:400px;width:300px;height:225px;background:#ffffff"></div>
<div style="position:absolute;left:804px;top:403px;width:294px;height:219px;background:#e2e2e2;border-radius:5px"></div>
<div class="t" style="left:805px;top:637.65px;font-size:14px;color:#2a2a2a;font-weight:700;font-family:'Liberation Sans', sans-serif;">8</div>
<div style="position:absolute;left:51px;top:232px;width:235px;height:80px;background:#ffffff;box-shadow:inset 0 0 0 1px #f6f6f6"></div>
<div style="position:absolute;left:288px;top:232px;width:39px;height:80px;background:#ffffff;box-shadow:inset 0 0 0 1px #f6f6f6"></div>
<div style="position:absolute;left:57px;top:237px;width:221px;height:68px;border:1px solid #6f7f74;border-radius:1px;background:#ffffff"></div>
<div style="position:absolute;left:58px;top:285px;width:221px;height:21px;background:#929e96"></div>
<div style="position:absolute;left:293px;top:237px;width:28px;height:68px;background:#c9c68b;border:1px solid #757f62"></div>
<div style="position:absolute;left:430px;top:144px;width:282px;height:44px;background:#ffffff;box-shadow:inset 0 0 0 3px #f9f9f9"></div>
<div style="position:absolute;left:810px;top:144px;width:282px;height:44px;background:#ffffff;box-shadow:inset 0 0 0 3px #f9f9f9"></div>
<div style="position:absolute;left:1191px;top:144px;width:282px;height:44px;background:#ffffff;box-shadow:inset 0 0 0 3px #f9f9f9"></div>
<div style="position:absolute;left:1571px;top:144px;width:282px;height:44px;background:#ffffff;box-shadow:inset 0 0 0 3px #f9f9f9"></div>
<div style="position:absolute;left:49px;top:409px;width:282px;height:44px;background:#ffffff;box-shadow:inset 0 0 0 3px #f9f9f9"></div>
<div style="position:absolute;left:430px;top:409px;width:282px;height:44px;background:#ffffff;box-shadow:inset 0 0 0 3px #f9f9f9"></div>
<div style="position:absolute;left:439.6px;top:199px;width:2.4px;height:2.4px;background:#a3b0ad"></div>
<div style="position:absolute;left:439.6px;top:274px;width:2.4px;height:2.4px;background:#a3b0ad"></div>
<div style="position:absolute;left:824.5px;top:200px;width:2.4px;height:2.4px;background:#a3b0ad"></div>
<div style="position:absolute;left:824.5px;top:226.5px;width:2.4px;height:2.4px;background:#a3b0ad"></div>
<div style="position:absolute;left:824.5px;top:253.5px;width:2.4px;height:2.4px;background:#a3b0ad"></div>
<div style="position:absolute;left:1200.8px;top:198px;width:2.4px;height:2.4px;background:#a3b0ad"></div>
<div style="position:absolute;left:1200.8px;top:237.3px;width:2.4px;height:2.4px;background:#a3b0ad"></div>
<div style="position:absolute;left:1200.8px;top:249px;width:2.4px;height:2.4px;background:#a3b0ad"></div>
<div style="position:absolute;left:1200.8px;top:269.7px;width:2.4px;height:2.4px;background:#a3b0ad"></div>
<div style="position:absolute;left:1200.8px;top:290.9px;width:2.4px;height:2.4px;background:#a3b0ad"></div>
<div style="position:absolute;left:1200.8px;top:311.7px;width:2.4px;height:2.4px;background:#a3b0ad"></div>
<div style="position:absolute;left:1200.8px;top:322.9px;width:2.4px;height:2.4px;background:#a3b0ad"></div>
<div style="position:absolute;left:1585px;top:200px;width:2.4px;height:2.4px;background:#a3b0ad"></div>
<div style="position:absolute;left:1585px;top:226px;width:2.4px;height:2.4px;background:#a3b0ad"></div>
<div style="position:absolute;left:58.7px;top:464.5px;width:2.4px;height:2.4px;background:#a3b0ad"></div>
<div style="position:absolute;left:58.7px;top:491px;width:2.4px;height:2.4px;background:#a3b0ad"></div>
<div style="position:absolute;left:58.7px;top:517.8px;width:2.4px;height:2.4px;background:#a3b0ad"></div>
<div style="position:absolute;left:58.7px;top:556px;width:2.4px;height:2.4px;background:#a3b0ad"></div>
<div style="position:absolute;left:443.7px;top:465.5px;width:2.4px;height:2.4px;background:#a3b0ad"></div>
<div style="position:absolute;left:443.7px;top:479px;width:2.4px;height:2.4px;background:#a3b0ad"></div>
<div style="position:absolute;left:443.7px;top:530px;width:2.4px;height:2.4px;background:#a3b0ad"></div>
<div class="t" style="left:72.2px;top:248.94px;font-size:13.2px;color:#5d6d66;font-weight:400;font-family:'Liberation Serif', serif;letter-spacing:0.846px;">АЮУЛГҮЙ АЖИЛЛАГААНЫ</div>
<div class="t" style="left:114.5px;top:264.94px;font-size:13.2px;color:#5d6d66;font-weight:400;font-family:'Liberation Serif', serif;letter-spacing:1.061px;">АЧ ХОЛБОГДОЛ</div>
<div class="t" style="left:106.2px;top:289.19px;font-size:8.4px;color:#f4f4f4;font-weight:400;font-family:'Liberation Sans', sans-serif;letter-spacing:0.541px;">UHG-GS RAILWAY PROJECT</div>
<div class="t" style="left:462.3px;top:150.76px;font-size:13.9px;color:#5d6d66;font-weight:400;font-family:'Liberation Serif', serif;letter-spacing:0.434px;">АЮУЛГҮЙ АЖИЛЛАГААНЫ АЧ</div>
<div class="t" style="left:486.2px;top:166.56px;font-size:13.9px;color:#5d6d66;font-weight:400;font-family:'Liberation Serif', serif;letter-spacing:0.381px;">ХОЛБОГДОЛ - НИЙГЭМД</div>
<div class="t" style="left:458px;top:194.67px;font-size:9.6px;color:#3a3a3a;font-weight:400;font-family:'Liberation Sans', sans-serif;letter-spacing:1.061px;">Осолд ертсөн болон мэргэжлээс шалтгаалах</div>
<div class="t" style="left:458px;top:206.77px;font-size:9.6px;color:#3a3a3a;font-weight:400;font-family:'Liberation Sans', sans-serif;letter-spacing:1.169px;">өвчнөөр өвчилсөн хүний  тоог бууруулснаас</div>
<div class="t" style="left:458px;top:218.87px;font-size:9.6px;color:#3a3a3a;font-weight:400;font-family:'Liberation Sans', sans-serif;letter-spacing:0.815px;">нийгмийн халамжийн сангаас гаргах хөрөнгийг</div>
<div class="t" style="left:458px;top:230.97px;font-size:9.6px;color:#3a3a3a;font-weight:400;font-family:'Liberation Sans', sans-serif;letter-spacing:0.632px;">тодорхой хэмжээгээр багасдаг. Зөвхөн 2006 онд</div>
<div class="t" style="left:458px;top:243.07px;font-size:9.6px;color:#3a3a3a;font-weight:400;font-family:'Liberation Sans', sans-serif;letter-spacing:0.282px;">Нийгэм халамжийн сангаас гарсан мөнгөн тэтгэвэр,</div>
<div class="t" style="left:458px;top:255.17px;font-size:9.6px;color:#3a3a3a;font-weight:400;font-family:'Liberation Sans', sans-serif;letter-spacing:0.185px;">олговрын хэмжээ 2.4 тэрбум төгрөгт хүрсэн байна.</div>
<div class="t" style="left:458px;top:269.47px;font-size:9.6px;color:#3a3a3a;font-weight:400;font-family:'Liberation Sans', sans-serif;letter-spacing:0.545px;">Хөдөлмөрийн чадвартай, нийгэмд баялаг бүтээж</div>
<div class="t" style="left:458px;top:281.57px;font-size:9.6px;color:#3a3a3a;font-weight:400;font-family:'Liberation Sans', sans-serif;letter-spacing:0.576px;">татвар төлөх хэдий чинээ олон хүн байна, төдий</div>
<div class="t" style="left:458px;top:293.67px;font-size:9.6px;color:#3a3a3a;font-weight:400;font-family:'Liberation Sans', sans-serif;letter-spacing:0.172px;">чинээ үр ашгийг нь нийгмийн бусад гишүүд хүртэнэ.</div>
<div class="t" style="left:936.2px;top:157.67px;font-size:14.6px;color:#5d6d66;font-weight:400;font-family:'Liberation Serif', serif;letter-spacing:-0.412px;">ХҮН</div>
<div class="t" style="left:831.8px;top:196.24px;font-size:10px;color:#474747;font-weight:400;font-family:'Liberation Sans', sans-serif;letter-spacing:0.353px;">Хүн бол нийгмийг бүтээгч, нийгмийн баялгийг</div>
<div class="t" style="left:831.8px;top:208.64px;font-size:10px;color:#474747;font-weight:400;font-family:'Liberation Sans', sans-serif;letter-spacing:0.395px;">бүтээгч тэр бодгаль билээ.</div>
<div class="t" style="left:831.8px;top:222.44px;font-size:10px;color:#474747;font-weight:400;font-family:'Liberation Sans', sans-serif;letter-spacing:0.423px;">Хүн байхгүй бол нийгэм байхгүй, улс үндэстэн</div>
<div class="t" style="left:831.8px;top:234.14px;font-size:10px;color:#474747;font-weight:400;font-family:'Liberation Sans', sans-serif;letter-spacing:0.339px;">оршин тогтнохгүй.</div>
<div class="t" style="left:831.8px;top:249.44px;font-size:10px;color:#474747;font-weight:400;font-family:'Liberation Sans', sans-serif;letter-spacing:0.388px;">Манай орны хувьд нийгэмд хөдөлмөрийн</div>
<div class="t" style="left:831.8px;top:261.84px;font-size:10px;color:#474747;font-weight:400;font-family:'Liberation Sans', sans-serif;letter-spacing:0.438px;">чадвартай иргэд олон байвал, нийгмийн хөгжил</div>
<div class="t" style="left:831.8px;top:274.24px;font-size:10px;color:#474747;font-weight:400;font-family:'Liberation Sans', sans-serif;letter-spacing:0.384px;">(ДНБ-ий өсөлт, нэг хүнд ногдох мөнгөн хөрөнгө)</div>
<div class="t" style="left:831.8px;top:285.14px;font-size:10px;color:#474747;font-weight:400;font-family:'Liberation Sans', sans-serif;letter-spacing:0.544px;">хурдан, улс орон чинээлэг байна.</div>
<div class="t" style="left:1223px;top:150.76px;font-size:13.9px;color:#5d6d66;font-weight:400;font-family:'Liberation Serif', serif;letter-spacing:0.462px;">АЮУЛГҮЙ АЖИЛЛАГААНЫ АЧ</div>
<div class="t" style="left:1239.5px;top:166.56px;font-size:13.9px;color:#5d6d66;font-weight:400;font-family:'Liberation Serif', serif;letter-spacing:0.473px;">ХОЛБОГДОЛ - КОМПАНИД</div>
<div class="t" style="left:1219px;top:195.97px;font-size:7.6px;color:#555555;font-weight:400;font-family:'Liberation Sans', sans-serif;letter-spacing:0.478px;">Ослын хэмжээ буурч, ослоос үүдэлтэй бусад сөрөг нөлөөлөл</div>
<div class="t" style="left:1219px;top:205.37px;font-size:7.6px;color:#555555;font-weight:400;font-family:'Liberation Sans', sans-serif;letter-spacing:0.358px;">(мэргэжлээс шалтгаалах өвчлөл, нөхөн төлбөр гм...), зардлууд</div>
<div class="t" style="left:1219px;top:214.87px;font-size:7.6px;color:#555555;font-weight:400;font-family:'Liberation Sans', sans-serif;letter-spacing:0.454px;">багасдаг. Хүн гэмтэх, тоног төхөөрөмж эвдрэх, байгаль орчин</div>
<div class="t" style="left:1219px;top:223.97px;font-size:7.6px;color:#555555;font-weight:400;font-family:'Liberation Sans', sans-serif;letter-spacing:0.153px;">сүйдэхээс гарч болох байсан бүх зардлууд хэмнэгдэнэ.</div>
<div class="t" style="left:1219px;top:234.76px;font-size:8.2px;color:#f2121a;font-weight:700;font-family:'Liberation Sans', sans-serif;letter-spacing:-0.250px;text-decoration:underline;text-decoration-skip-ink:none;text-decoration-thickness:1px;text-underline-offset:1px;">ҮР АШИГТАЙ</div>
<div class="t" style="left:1270px;top:235.52px;font-size:7.3px;color:#f2121a;font-weight:400;font-family:'Liberation Sans', sans-serif;letter-spacing:0.342px;text-decoration:underline;text-decoration-skip-ink:none;text-decoration-thickness:1px;text-underline-offset:1px;">, Аюулгүй үйлдвэрлэлийн</div>
<div class="t" style="left:1366px;top:235.27px;font-size:7.6px;color:#555555;font-weight:400;font-family:'Liberation Sans', sans-serif;letter-spacing:0.221px;">орчин бий болдог.</div>
<div class="t" style="left:1219px;top:246.88px;font-size:7.7px;color:#555555;font-weight:400;font-family:'Liberation Sans', sans-serif;letter-spacing:0.774px;">Хүний эрхийг хангаж, аюулгүй ажлын байр бүрдүүлснээр</div>
<div class="t" style="left:1219px;top:256.22px;font-size:7.3px;color:#555555;font-weight:400;font-family:'Liberation Sans', sans-serif;letter-spacing:0.253px;">компанийн</div>
<div class="t" style="left:1261px;top:255.46px;font-size:8.2px;color:#f2121a;font-weight:700;font-family:'Liberation Sans', sans-serif;letter-spacing:-0.319px;text-decoration:underline;text-decoration-skip-ink:none;text-decoration-thickness:1px;text-underline-offset:1px;">НЭР ХҮНД</div>
<div class="t" style="left:1303.5px;top:255.97px;font-size:7.6px;color:#555555;font-weight:400;font-family:'Liberation Sans', sans-serif;letter-spacing:0.149px;">өсдөг. Аюулгүй ажиллагаагаар PR хийдэг.</div>
<div class="t" style="left:1219px;top:267.67px;font-size:7.6px;color:#555555;font-weight:400;font-family:'Liberation Sans', sans-serif;letter-spacing:0.371px;">Эрүүл, аюулгүй ажлын байрыг бүрдүүлж өгснөөр тус компанид</div>
<div class="t" style="left:1219px;top:277.17px;font-size:7.6px;color:#555555;font-weight:400;font-family:'Liberation Sans', sans-serif;letter-spacing:0.151px;">чадварлаг боловсон хүчин ажиллах сонирхлыг бий болгодог.</div>
<div class="t" style="left:1219px;top:288.87px;font-size:7.6px;color:#555555;font-weight:400;font-family:'Liberation Sans', sans-serif;letter-spacing:0.543px;">Хариуцлагын тогтолцоо сайжирдаг. Шат, шатны удирдлагууд</div>
<div class="t" style="left:1219px;top:298.07px;font-size:7.6px;color:#555555;font-weight:400;font-family:'Liberation Sans', sans-serif;letter-spacing:0.328px;">ажилтднхаа өмнөөс хариуцлага хүлээнэ.</div>
<div class="t" style="left:1219px;top:309.67px;font-size:7.6px;color:#555555;font-weight:400;font-family:'Liberation Sans', sans-serif;letter-spacing:0.145px;">Аюулгүй ажиллагааны статистик тоо баримт нарийсдаг.</div>
<div class="t" style="left:1219px;top:320.87px;font-size:7.6px;color:#555555;font-weight:400;font-family:'Liberation Sans', sans-serif;letter-spacing:0.168px;">Хөдөлмөрийн сахилга бат дээшилдэг.</div>
<div class="t" style="left:1697.4px;top:157.67px;font-size:14.6px;color:#5d6d66;font-weight:400;font-family:'Liberation Serif', serif;letter-spacing:-0.412px;">ХҮН</div>
<div class="t" style="left:1592.5px;top:196.24px;font-size:10px;color:#474747;font-weight:400;font-family:'Liberation Sans', sans-serif;letter-spacing:0.479px;">Компаний амжилт, ашиг орлого зөвхөн хүний ур</div>
<div class="t" style="left:1592.5px;top:208.64px;font-size:10px;color:#474747;font-weight:400;font-family:'Liberation Sans', sans-serif;letter-spacing:0.615px;">чадвар, бүтээмжээс шалтгаалдаг.</div>
<div class="t" style="left:1592.5px;top:222.03px;font-size:10px;color:#474747;font-weight:400;font-family:'Liberation Sans', sans-serif;letter-spacing:0.406px;">Чадварлаг ажилтан, ажиллагсад олох нь</div>
<div class="t" style="left:1592.5px;top:234.14px;font-size:10px;color:#474747;font-weight:400;font-family:'Liberation Sans', sans-serif;letter-spacing:0.485px;">компанийн нэн тэргүүний зорилгуудын нэг юм.</div>
<div class="t" style="left:81.4px;top:415.86px;font-size:13.9px;color:#5d6d66;font-weight:400;font-family:'Liberation Serif', serif;letter-spacing:0.429px;">АЮУЛГҮЙ АЖИЛЛАГААНЫ АЧ</div>
<div class="t" style="left:82.7px;top:431.86px;font-size:13.9px;color:#5d6d66;font-weight:400;font-family:'Liberation Serif', serif;letter-spacing:0.467px;">ХОЛБОГДОЛ – АЖИЛТНУУДАД</div>
<div class="t" style="left:77px;top:461.23px;font-size:9.3px;color:#3a3a3a;font-weight:400;font-family:'Liberation Sans', sans-serif;letter-spacing:0.520px;">Урт хугацааны, итгэж болохуйц, "Эрүүл - Аюулгүй"</div>
<div class="t" style="left:77px;top:472.93px;font-size:9.3px;color:#3a3a3a;font-weight:400;font-family:'Liberation Sans', sans-serif;letter-spacing:0.406px;">ажлын байр үүсдэг.</div>
<div class="t" style="left:77px;top:487.83px;font-size:9.3px;color:#3a3a3a;font-weight:400;font-family:'Liberation Sans', sans-serif;letter-spacing:0.800px;">Аюулыг таних, түүнийг арилгах, аюулд өртөхгүй</div>
<div class="t" style="left:77px;top:499.43px;font-size:9.3px;color:#3a3a3a;font-weight:400;font-family:'Liberation Sans', sans-serif;letter-spacing:0.313px;">байх  мэдлэг, чадвартай болдог.</div>
<div class="t" style="left:77px;top:514.53px;font-size:9.3px;color:#3a3a3a;font-weight:400;font-family:'Liberation Sans', sans-serif;letter-spacing:0.525px;">Хөдөлмөрийн чадавхиа удаан хугацаанд хадгалан</div>
<div class="t" style="left:77px;top:526.13px;font-size:9.3px;color:#3a3a3a;font-weight:400;font-family:'Liberation Sans', sans-serif;letter-spacing:1.098px;">нийгэмд баялаг бүтээхэд өөрийн хувь нэмрээ</div>
<div class="t" style="left:77px;top:537.83px;font-size:9.3px;color:#3a3a3a;font-weight:400;font-family:'Liberation Sans', sans-serif;letter-spacing:0.262px;">оруулдаг.</div>
<div class="t" style="left:77px;top:552.83px;font-size:9.3px;color:#3a3a3a;font-weight:400;font-family:'Liberation Sans', sans-serif;letter-spacing:1.864px;">Удаан хугацаанд хөдөлмөрийн чадвараа</div>
<div class="t" style="left:77px;top:564.83px;font-size:9.3px;color:#3a3a3a;font-weight:400;font-family:'Liberation Sans', sans-serif;letter-spacing:0.645px;">хадгалснаар өөрийн гэр бүлд тогтвортой орлогыг</div>
<div class="t" style="left:77px;top:576.43px;font-size:9.3px;color:#3a3a3a;font-weight:400;font-family:'Liberation Sans', sans-serif;letter-spacing:0.516px;">бий болгодог бөгөөд гэр бүлийн нэгэн үнэт гишүүн</div>
<div class="t" style="left:77px;top:588.43px;font-size:9.3px;color:#3a3a3a;font-weight:400;font-family:'Liberation Sans', sans-serif;letter-spacing:0.286px;">байж чаддаг.</div>
<div class="t" style="left:556px;top:423.17px;font-size:14.6px;color:#5d6d66;font-weight:400;font-family:'Liberation Serif', serif;letter-spacing:-0.412px;">ХҮН</div>
<div class="t" style="left:450.7px;top:461.44px;font-size:10px;color:#474747;font-weight:400;font-family:'Liberation Sans', sans-serif;letter-spacing:0.322px;">Гэр бүлд аав, ээж, хүүхдүүд хэрэгтэй.</div>
<div class="t" style="left:450.7px;top:475.04px;font-size:10px;color:#474747;font-weight:400;font-family:'Liberation Sans', sans-serif;letter-spacing:0.486px;">Ажил хийж байгаа өрхийн гишүүд гэр бүлдээ</div>
<div class="t" style="left:450.7px;top:487.04px;font-size:10px;color:#474747;font-weight:400;font-family:'Liberation Sans', sans-serif;letter-spacing:0.483px;">тодорхой орлогыг бий болгож байдаг бөгөөд энэ</div>
<div class="t" style="left:450.7px;top:499.14px;font-size:10px;color:#474747;font-weight:400;font-family:'Liberation Sans', sans-serif;letter-spacing:0.444px;">нь тэднийг гэр бүлдээ үнэтэй гишүүн болгож</div>
<div class="t" style="left:450.7px;top:511.04px;font-size:10px;color:#474747;font-weight:400;font-family:'Liberation Sans', sans-serif;letter-spacing:0.842px;">байдаг.</div>
<div class="t" style="left:450.7px;top:526.13px;font-size:10px;color:#474747;font-weight:400;font-family:'Liberation Sans', sans-serif;letter-spacing:0.393px;">Хүүхдүүдийн ирээдүй тэдний боловсролын</div>
<div class="t" style="left:450.7px;top:538.03px;font-size:10px;color:#474747;font-weight:400;font-family:'Liberation Sans', sans-serif;letter-spacing:0.576px;">түвшин гэр бүлийн орлогоос зарим талаараа</div>
<div class="t" style="left:450.7px;top:550.13px;font-size:10px;color:#474747;font-weight:400;font-family:'Liberation Sans', sans-serif;letter-spacing:0.790px;">хамааралтай.</div>
<div class="t" style="left:844px;top:503.86px;font-size:13.4px;color:#1e1e1e;font-weight:400;font-family:'Liberation Sans', sans-serif;letter-spacing:0.719px;">Анхаарал тавьсанд баярлалаа</div>
<div style="position:absolute;left:1903px;top:125px;width:17px;height:826px;background:#e0e0e0"></div>
<svg style="position:absolute;left:1908px;top:134px" width="7" height="5" viewBox="0 0 7 5" fill="none"><path d="M0 4.5L3.5 0.5L7 4.5Z" fill="#7a7a7a"/></svg>
<div style="position:absolute;left:1903px;top:149px;width:15px;height:775px;background:#f4f4f4;border:1px solid #a8a8a8;border-radius:8px"></div>
<svg style="position:absolute;left:1907px;top:937px" width="8" height="5" viewBox="0 0 8 5" fill="none"><path d="M0 0.5L4 4.5L8 0.5Z" fill="#7a7a7a"/></svg>
<div class="t" style="left:1554.5px;top:889.17px;font-size:25.2px;color:#bdbdbd;font-weight:400;font-family:'Liberation Sans', sans-serif;">Activate Windows</div>
<div class="t" style="left:1554.5px;top:921.76px;font-size:18px;color:#c1c1c1;font-weight:400;font-family:'Liberation Sans', sans-serif;">Go to Settings to activate Windows.</div>
<div style="position:absolute;left:0px;top:951px;width:1920px;height:40px;background:#f3f3f3"></div>
<div style="position:absolute;left:0px;top:991px;width:1920px;height:7px;background:#1f2023"></div>
<div style="position:absolute;left:310px;top:991px;width:60px;height:7px;background:#4a4a4a"></div>
<div class="t" style="left:12px;top:967.46px;font-size:12.8px;color:#555555;font-weight:400;font-family:'Liberation Sans', sans-serif;">Slide Sorter</div>
<div style="position:absolute;left:93px;top:956px;width:1px;height:30px;background:#dddddd"></div>
<div class="t" style="left:106px;top:967.46px;font-size:12.8px;color:#555555;font-weight:400;font-family:'Liberation Sans', sans-serif;">Apothecary</div>
<div style="position:absolute;left:185px;top:956px;width:1px;height:30px;background:#dddddd"></div>
<svg style="position:absolute;left:201px;top:962px" width="16" height="17" viewBox="0 0 16 17" fill="none"><path d="M1 2.5V1H12V2.5M6.5 1V15M4 15H9" stroke="#555" stroke-width="1.3"/><text x="10" y="16" font-size="9" fill="#555" font-family="Liberation Sans" font-weight="700">?</text></svg>
<div class="t" style="left:223px;top:966.46px;font-size:12.8px;color:#555555;font-weight:400;font-family:'Liberation Sans', sans-serif;">Font Missing</div>
<div style="position:absolute;left:310px;top:956px;width:1px;height:30px;background:#dddddd"></div>
<svg style="position:absolute;left:1321px;top:962px" width="18" height="19" viewBox="0 0 18 19" fill="none"><rect x="1" y="4" width="12" height="14" rx="1" stroke="#555555" stroke-width="1.3"/><path d="M4 1H16a1 1 0 0 1 1 1V14" stroke="#aaa" stroke-width="1.2"/><path d="M6 8V12H9" stroke="#555555" stroke-width="1.2"/></svg>
<svg style="position:absolute;left:1352px;top:962px" width="19" height="20" viewBox="0 0 19 20" fill="none"><path d="M5 6V2a1 1 0 0 1 1-1H16a1 1 0 0 1 1 1V18a1 1 0 0 1-1 1H6a1 1 0 0 1-1-1V14M8 16H14" stroke="#555555" stroke-width="1.3"/><path d="M0.5 10H10M7 7L10 10L7 13" stroke="#555555" stroke-width="1.3"/></svg>
<svg style="position:absolute;left:1378px;top:962px" width="30" height="20" viewBox="0 0 30 20" fill="none"><path d="M0 2H17M0 6H17M0 10H17M0 14H12" stroke="#aaa" stroke-width="1.3"/><path d="M12 14L14.5 17L17 14Z" fill="#999"/><path d="M23 8H29L26 11Z" fill="#aaa"/></svg>
<svg style="position:absolute;left:1420px;top:962px" width="21" height="19" viewBox="0 0 21 19" fill="none"><rect x="1" y="1" width="19" height="17" rx="1.5" stroke="#555555" stroke-width="1.4"/><path d="M6 1V13H20" stroke="#555555" stroke-width="1.3"/></svg>
<div style="position:absolute;left:1447px;top:956px;width:29px;height:30px;background:#c9c9c9;border-radius:4px"></div>
<svg style="position:absolute;left:1452px;top:962px" width="20" height="19" viewBox="0 0 20 19" fill="none"><rect x="1" y="1" width="7.5" height="7" rx="2" stroke="#555555" stroke-width="1.4" fill="#b5b5b5"/><rect x="11.5" y="1" width="7.5" height="7" rx="2" stroke="#555555" stroke-width="1.4" fill="#b5b5b5"/><rect x="1" y="11" width="7.5" height="7" rx="2" stroke="#555555" stroke-width="1.4" fill="#b5b5b5"/><rect x="11.5" y="11" width="7.5" height="7" rx="2" stroke="#555555" stroke-width="1.4" fill="#b5b5b5"/></svg>
<svg style="position:absolute;left:1483px;top:962px" width="21" height="19" viewBox="0 0 21 19" fill="none"><path d="M10.5 3.5V18.5M1 2H7a3.5 3.5 0 0 1 3.5 1.5A3.5 3.5 0 0 1 14 2H20V17H14a3.5 3.5 0 0 0-3.5 1.5A3.5 3.5 0 0 0 7 17H1Z" stroke="#555555" stroke-width="1.3"/></svg>
<div style="position:absolute;left:1525px;top:956px;width:39px;height:30px;background:#fa7352;border-radius:4px"></div>
<svg style="position:absolute;left:1539px;top:963px" width="12" height="16" viewBox="0 0 12 16" fill="none"><path d="M1 1L11 8L1 15Z" fill="#ffffff" stroke="#ffffff" stroke-width="1" stroke-linejoin="round"/></svg>
<div class="t" style="left:1582px;top:966.09px;font-size:12.3px;color:#555555;font-weight:400;font-family:'Liberation Sans', sans-serif;">100%</div>
<svg style="position:absolute;left:1619px;top:969px" width="7" height="4" viewBox="0 0 7 4" fill="none"><path d="M0 0H6L3 3Z" fill="#777"/></svg>
<div style="position:absolute;left:1639px;top:970px;width:16px;height:2.4px;background:#555555"></div>
<div style="position:absolute;left:1668px;top:970px;width:84px;height:1.2px;background:#6e6e6e"></div>
<div style="position:absolute;left:1752px;top:970px;width:88px;height:1px;background:#bdbdbd"></div>
<div style="position:absolute;left:1745px;top:963px;width:13px;height:13px;border:1.5px solid #555;border-radius:50%;background:#f3f3f3"></div>
<svg style="position:absolute;left:1853px;top:963px" width="16" height="16" viewBox="0 0 16 16" fill="none"><path d="M8 0.5V15.5M0.5 8H15.5" stroke="#555" stroke-width="2.2"/></svg>
<svg style="position:absolute;left:1885px;top:963px" width="17" height="17" viewBox="0 0 17 17" fill="none"><path d="M1 5V2a1 1 0 0 1 1-1H5M12 1H15a1 1 0 0 1 1 1V5M16 12V15a1 1 0 0 1-1 1H12M5 16H2a1 1 0 0 1-1-1V12" stroke="#555" stroke-width="1.5"/><circle cx="8.5" cy="8.5" r="1.2" fill="#555"/></svg>
</body></html>
